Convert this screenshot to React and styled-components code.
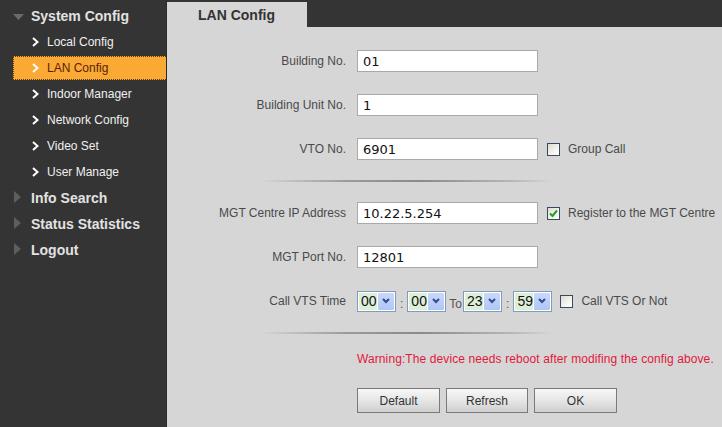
import React from "react";
import styled, { createGlobalStyle } from "styled-components";

const Global = createGlobalStyle`
  html, body { margin: 0; padding: 0; background: #343434; }
  body { font-family: "Liberation Sans", Arial, sans-serif; font-size: 12px; }
  * { box-sizing: border-box; }
`;

const Page = styled.div`
  display: grid;
  grid-template-columns: 167px 1fr;
  width: 722px;
  height: 427px;
  overflow: hidden;
  background: #343434;
`;

const Sidebar = styled.nav`
  display: flex;
  flex-direction: column;
  padding-top: 3px;
  background: #343434;
  border-right: 1px solid #2a2a2a;
`;

const Section = styled.div`
  display: flex;
  align-items: center;
  height: 26px;
  padding-left: ${(p) => (p.$open ? 13 : 14)}px;
  color: #e2e2e2;
  font-weight: bold;
  font-size: 14px;
`;

const SectionIcon = styled.span`
  display: inline-block;
  width: ${(p) => (p.$open ? 18 : 17)}px;
  flex: none;
`;

const SubItem = styled.div`
  display: flex;
  align-items: center;
  height: 24px;
  margin: 1px 0 1px 13px;
  padding-left: 18px;
  font-size: 12px;
  color: ${(p) => (p.$active ? "#5a1f0a" : "#f0f0f0")};
  background: ${(p) => (p.$active ? "#fba935" : "transparent")};
  border: 1px dotted ${(p) => (p.$active ? "#5a3a10" : "transparent")};
  border-right: none;
`;

const Chevron = styled.span`
  display: inline-flex;
  width: 15px;
  flex: none;
`;

const Main = styled.main`
  display: flex;
  flex-direction: column;
`;

const TabBar = styled.div`
  display: flex;
  height: 27px;
  padding-top: 2px;
  background: #343434;
`;

const Tab = styled.div`
  width: 140px;
  height: 25px;
  padding-left: 31px;
  display: flex;
  align-items: center;
  background: #d6d6d6;
  color: #333;
  font-weight: bold;
  font-size: 14px;
`;

const Content = styled.div`
  flex: 1;
  background: #d6d6d6;
  padding-top: 12px;
  display: flex;
  flex-direction: column;
`;

const Row = styled.div`
  display: flex;
  align-items: center;
  height: 44px;
`;

const Label = styled.div`
  width: 179px;
  margin-right: 11px;
  text-align: right;
  color: #4a4a4a;
  font-size: 12px;
`;

const TextInput = styled.div`
  width: 181px;
  height: 22px;
  border: 1px solid #a9a9a9;
  background: #fff;
  padding-left: 5px;
  display: flex;
  align-items: center;
  font-family: "DejaVu Sans", Verdana, sans-serif;
  font-size: 13px;
  color: #111;
`;

const CheckWrap = styled.label`
  display: flex;
  align-items: center;
  margin-left: ${(p) => p.$ml || 9}px;
  color: #4a4a4a;
  font-size: 12px;
`;

const Box = styled.span`
  width: 13px;
  height: 13px;
  border: 1px solid #3b4b5e;
  background: linear-gradient(135deg, #dedbd2 0%, #f4f4f0 60%, #ffffff 100%);
  margin-right: 8px;
  display: inline-flex;
  align-items: center;
  justify-content: center;
`;

const Separator = styled.div`
  height: 20px;
  display: flex;
  align-items: center;
  padding-left: 93px;
  &::after {
    content: "";
    width: 293px;
    height: 2px;
    background: linear-gradient(
      to right,
      rgba(150, 150, 150, 0) 0%,
      #9a9a9a 30%,
      #8a8a8a 55%,
      #b5b5b5 85%,
      rgba(200, 200, 200, 0) 100%
    );
  }
`;

const SelectBox = styled.div`
  width: 39px;
  height: 21px;
  border: 1px solid #7f9db9;
  display: flex;
  background: #fff;
`;

const SelectValue = styled.div`
  flex: 1;
  margin: 1px;
  background: #dcefd8;
  display: flex;
  align-items: center;
  padding-left: 2px;
  font-size: 14px;
  color: #111;
`;

const SelectBtn = styled.div`
  width: 16px;
  margin: 1px 1px 1px 0;
  background: linear-gradient(#c9d8fb, #b1c6f5);
  border-radius: 1px;
  display: flex;
  align-items: center;
  justify-content: center;
`;

const Sep = styled.span`
  color: #555;
  font-size: 12px;
  padding: ${(p) => p.$pad || "6px 4px 0"};
  align-self: center;
`;

const Warning = styled.div`
  height: 30px;
  display: flex;
  align-items: center;
  padding-left: 190px;
  padding-top: 1px;
  color: #e3183a;
  font-size: 12px;
  letter-spacing: 0.1px;
`;

const Buttons = styled.div`
  display: flex;
  padding-left: 190px;
  margin-top: 15px;
  gap: 6px;
`;

const Button = styled.button`
  width: ${(p) => p.$w}px;
  height: 25px;
  border: 1px solid #7a7a7a;
  background: linear-gradient(#f7f7f7 0%, #e6e6e6 50%, #cfcfcf 100%);
  font-family: "Liberation Sans", Arial, sans-serif;
  font-size: 12px;
  color: #333;
  padding: 0;
`;

const Tri = ({ open }) =>
  open ? (
    <svg width="12" height="8" viewBox="0 0 12 8">
      <polygon points="0,1 11,1 5.5,7" fill="#6a6a6a" />
    </svg>
  ) : (
    <svg width="8" height="12" viewBox="0 0 8 12">
      <polygon points="0,0 7,6 0,12" fill="#5e5e5e" />
    </svg>
  );

const Chev = () => (
  <svg width="7" height="10" viewBox="0 0 7 10">
    <polyline points="1,1 5.5,5 1,9" fill="none" stroke="#fff" strokeWidth="2" />
  </svg>
);

const Check = () => (
  <svg width="9" height="9" viewBox="0 0 9 9">
    <polyline points="1,4.5 3.5,7 8,1.5" fill="none" stroke="#22a022" strokeWidth="2" />
  </svg>
);

const Select = ({ value }) => (
  <SelectBox>
    <SelectValue>{value}</SelectValue>
    <SelectBtn>
      <svg width="8" height="6" viewBox="0 0 8 6">
        <polyline points="1,1 4,4 7,1" fill="none" stroke="#2d4d8e" strokeWidth="2" />
      </svg>
    </SelectBtn>
  </SelectBox>
);

const subs = ["Local Config", "LAN Config", "Indoor Manager", "Network Config", "Video Set", "User Manage"];

export default function App() {
  return (
    <>
      <Global />
      <Page>
        <Sidebar>
          <Section $open>
            <SectionIcon $open>
              <Tri open />
            </SectionIcon>
            System Config
          </Section>
          {subs.map((s) => (
            <SubItem key={s} $active={s === "LAN Config"}>
              <Chevron>
                <Chev />
              </Chevron>
              {s}
            </SubItem>
          ))}
          {["Info Search", "Status Statistics", "Logout"].map((s) => (
            <Section key={s}>
              <SectionIcon>
                <Tri />
              </SectionIcon>
              {s}
            </Section>
          ))}
        </Sidebar>
        <Main>
          <TabBar>
            <Tab>LAN Config</Tab>
          </TabBar>
          <Content>
            <Row>
              <Label>Building No.</Label>
              <TextInput>01</TextInput>
            </Row>
            <Row>
              <Label>Building Unit No.</Label>
              <TextInput>1</TextInput>
            </Row>
            <Row>
              <Label>VTO No.</Label>
              <TextInput>6901</TextInput>
              <CheckWrap>
                <Box />
                Group Call
              </CheckWrap>
            </Row>
            <Separator />
            <Row>
              <Label>MGT Centre IP Address</Label>
              <TextInput>10.22.5.254</TextInput>
              <CheckWrap>
                <Box>
                  <Check />
                </Box>
                Register to the MGT Centre
              </CheckWrap>
            </Row>
            <Row>
              <Label>MGT Port No.</Label>
              <TextInput>12801</TextInput>
            </Row>
            <Row>
              <Label>Call VTS Time</Label>
              <Select value="00" />
              <Sep>:</Sep>
              <Select value="00" />
              <Sep $pad="6px 1px 0 3px">To</Sep>
              <Select value="23" />
              <Sep>:</Sep>
              <Select value="59" />
              <CheckWrap $ml={8}>
                <Box />
                Call VTS Or Not
              </CheckWrap>
            </Row>
            <Separator />
            <Warning>Warning:The device needs reboot after modifing the config above.</Warning>
            <Buttons>
              <Button $w={83}>Default</Button>
              <Button $w={82}>Refresh</Button>
              <Button $w={83}>OK</Button>
            </Buttons>
          </Content>
        </Main>
      </Page>
    </>
  );
}
